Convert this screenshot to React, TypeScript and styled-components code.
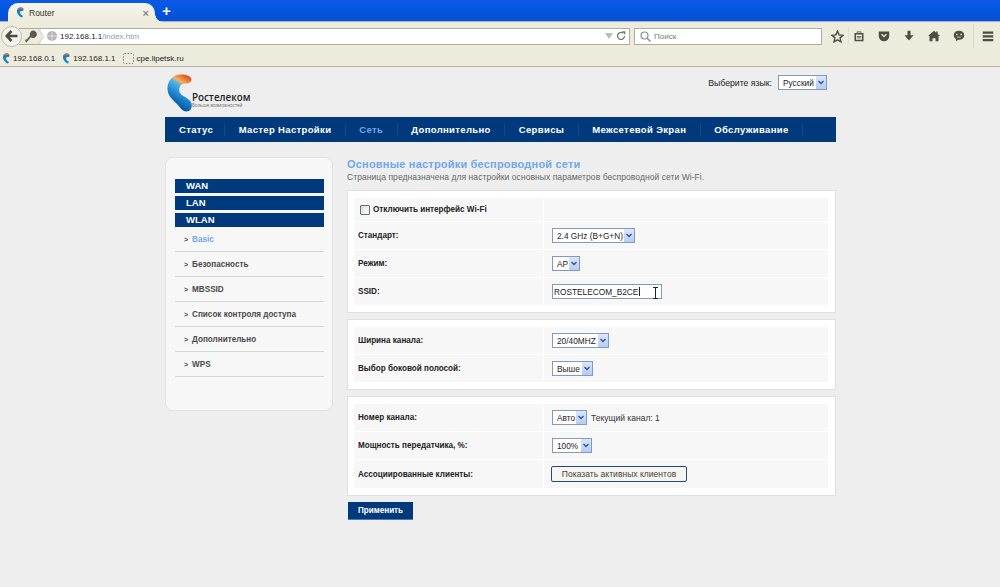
import React from 'react';
import styled, { createGlobalStyle } from 'styled-components';

const GlobalStyle = createGlobalStyle`
  html, body {
    margin: 0;
    padding: 0;
    height: 587px;
    overflow: hidden;
    background: #eeeeee;
    font-family: "Liberation Sans", Arial, sans-serif;
  }
`;

const TabStrip = styled.div`
  height: 22px;
  display: flex;
  align-items: flex-end;
  padding-left: 8px;
  background: linear-gradient(180deg, #0a5ae6 0%, #0253de 60%, #0a4fd0 100%);
  border-bottom: 1px solid #9db3d6;
  box-sizing: border-box;
`;

const Tab = styled.div`
  position: relative;
  width: 147px;
  height: 19px;
  margin-bottom: -1px;
  display: flex;
  align-items: center;
  box-sizing: border-box;
  padding: 0 6px 0 8px;
  gap: 5px;
  background: linear-gradient(180deg, #f6f5ec 0%, #ecebdc 100%);
  border-radius: 10px 10px 0 0;
  font-size: 8.5px;
  color: #333;

  &::after {
    content: '';
    position: absolute;
    right: -8px;
    bottom: 0;
    width: 8px;
    height: 8px;
    background: radial-gradient(circle at 100% 0, transparent 7.5px, #ecebdc 8px);
  }
`;

const TabTitle = styled.span`
  flex: 1;
`;

const TabClose = styled.span`
  font-size: 11px;
  font-weight: bold;
  color: #8a8a86;
`;

const NewTab = styled.span`
  margin: 0 0 3px 7px;
  color: #fff;
  font-size: 15px;
  font-weight: bold;
  line-height: 14px;
`;

const Toolbar = styled.div`
  height: 28px;
  display: flex;
  align-items: center;
  box-sizing: border-box;
  padding-left: 1px;
  background: #ecebdc;
`;

const BackButton = styled.div`
  width: 19px;
  height: 19px;
  display: flex;
  align-items: center;
  justify-content: center;
  border-radius: 50%;
  border: 1px solid #b9b8aa;
  background: #f4f3ea;
  flex: none;
  z-index: 1;
`;

const UrlBar = styled.div`
  flex: 1;
  height: 17px;
  box-sizing: border-box;
  display: flex;
  align-items: center;
  margin-left: -3px;
  padding-right: 3px;
  gap: 3px;
  background: #fff;
  border: 1px solid #aeac9c;
  border-left: none;
  font-size: 8px;
  color: #222;
`;

const IdentityBlock = styled.div`
  display: flex;
  align-items: center;
  gap: 1px;
  align-self: stretch;
  padding-left: 6px;
  background: linear-gradient(90deg, #ecebdc 90%, #fff 90%);
`;

const UrlText = styled.span`
  flex: 1;
  white-space: nowrap;
`;

const UrlPath = styled.span`
  color: #9a9a9a;
`;

const SearchBar = styled.div`
  width: 188px;
  height: 17px;
  box-sizing: border-box;
  display: flex;
  align-items: center;
  gap: 3px;
  margin: 0 0 0 4px;
  padding: 0 5px;
  background: #fff;
  border: 1px solid #aeac9c;
  font-size: 8px;
  color: #777;
  flex: none;
`;

const ToolIcons = styled.div`
  display: flex;
  align-items: center;
  gap: 13px;
  width: 170px;
  margin-left: 8px;
  padding-left: 1px;
  flex: none;
  box-sizing: border-box;
`;

const StarGroup = styled.span`
  display: flex;
  align-items: center;
  gap: 4px;
  margin-right: -9px;
`;

const FaintDivider = styled.span`
  width: 1px;
  height: 18px;
  background: #e0dfd0;
`;

const ToolDivider = styled.span`
  width: 1px;
  height: 24px;
  margin: 0 -5px;
  background: #d9d8c8;
`;

const BookmarksBar = styled.div`
  height: 17px;
  display: flex;
  align-items: center;
  gap: 7px;
  padding-left: 2px;
  box-sizing: border-box;
  background: #ecebdc;
  border-bottom: 1px solid #b4b3a6;
  font-size: 8px;
  color: #222;
`;

const Bookmark = styled.span`
  display: flex;
  align-items: center;
  gap: 3px;
`;

const Page = styled.div`
  width: 671px;
  margin: 0 0 0 165px;
`;

const Header = styled.div`
  height: 50px;
  display: flex;
  justify-content: space-between;
  align-items: flex-start;
  padding-right: 9px;
`;

const Logo = styled.div`
  display: flex;
  align-items: flex-end;
  padding: 7px 0 0 2px;
`;

const LogoText = styled.div`
  margin: 0 0 4px 0;
  font-size: 9.8px;
  font-weight: 600;
  line-height: 10px;
  color: #222;
  font-family: "Open Sans", sans-serif;
`;

const LogoSub = styled.div`
  font-size: 4.5px;
  font-weight: normal;
  line-height: 5px;
  color: #666;
`;

const LangBox = styled.div`
  display: flex;
  align-items: center;
  gap: 6px;
  margin-top: 8px;
  font-size: 8.7px;
  color: #222;
`;

const Nav = styled.div`
  height: 25px;
  display: flex;
  align-items: center;
  padding-left: 0.5px;
  background: #003a7d;
`;

const NavItem = styled.div<{ $active?: boolean }>`
  padding: 0 13.5px;
  height: 13px;
  line-height: 13px;
  font-size: 9.5px;
  font-weight: bold;
  letter-spacing: 0.35px;
  white-space: nowrap;
  color: ${(p) => (p.$active ? '#6fa8ea' : '#fff')};
  border-right: 1px solid #12498a;

  &:first-child {
    padding-right: 11px;
  }
`;

const Main = styled.div`
  display: flex;
  align-items: flex-start;
  margin-top: 15px;
`;

const Sidebar = styled.div`
  width: 168px;
  height: 254px;
  box-sizing: border-box;
  padding: 21px 8px 0 9px;
  flex: none;
  background: #f7f7f7;
  border: 1px solid #e2e2e2;
  border-radius: 8px;
`;

const SideHead = styled.div`
  height: 14px;
  line-height: 14px;
  margin-bottom: 3px;
  padding-left: 11px;
  background: #003a7d;
  color: #fff;
  font-size: 9.5px;
  font-weight: bold;
`;

const SideItem = styled.div<{ $active?: boolean }>`
  height: 25px;
  box-sizing: border-box;
  display: flex;
  align-items: center;
  gap: 4px;
  padding-left: 9px;
  border-bottom: 1px solid #d6d6d6;
  font-size: 8.15px;
  font-weight: bold;
  color: ${(p) => (p.$active ? '#6fa8ea' : '#4a4a4a')};
`;

const SideList = styled.div`
  margin-top: -3px;
`;

const SideMark = styled.span`
  font-size: 7px;
  color: #444;
`;

const Content = styled.div`
  width: 489px;
  margin: 0 0 0 14px;
`;

const Title = styled.div`
  margin-top: 1px;
  font-size: 11px;
  line-height: 13px;
  font-weight: bold;
  letter-spacing: 0.2px;
  color: #6fa8ea;
`;

const Subtitle = styled.div`
  font-size: 8.5px;
  line-height: 13px;
  letter-spacing: 0.06px;
  color: #666;
  margin-bottom: 6px;
`;

const Panel = styled.div`
  background: #fff;
  border: 1px solid #e0e0e0;
  padding: 7px 7px 7px 6px;
  margin-bottom: 6px;
  display: flex;
  flex-direction: column;
  gap: 1px;
`;

const Row = styled.div<{ $height: number }>`
  height: ${(p) => p.$height}px;
  display: grid;
  grid-template-columns: 189px 1fr;
  gap: 1px;
`;

const LabelCell = styled.div<{ $indent?: boolean }>`
  display: flex;
  align-items: center;
  gap: 3px;
  padding-left: ${(p) => (p.$indent ? '6px' : '4px')};
  background: #f7f7f7;
  font-size: 8.15px;
  font-weight: bold;
  color: #222;
`;

const ValueCell = styled.div`
  display: flex;
  align-items: center;
  gap: 4px;
  padding-left: 8px;
  background: #f7f7f7;
  font-size: 8.5px;
  color: #333;
`;

const CheckBox = styled.span`
  width: 8px;
  height: 8px;
  border: 1px solid #5f6f80;
  border-radius: 1px;
  background: linear-gradient(135deg, #dcdcd6, #fff);
  flex: none;
`;

const SelectWrap = styled.span`
  position: relative;
  display: inline-flex;
`;

const NativeSelect = styled.select<{ $width: number }>`
  appearance: none;
  width: ${(p) => p.$width}px;
  height: 15px;
  box-sizing: border-box;
  padding: 0 0 0 4px;
  border: 1px solid #7f9db9;
  border-radius: 0;
  background: #fff;
  font-family: "Liberation Sans", Arial, sans-serif;
  font-size: 8.3px;
  color: #222;
`;

const SelectArrow = styled.span`
  position: absolute;
  top: 1px;
  right: 1px;
  bottom: 1px;
  width: 10px;
  display: flex;
  align-items: center;
  justify-content: center;
  background: linear-gradient(180deg, #dbe6fb, #b6cbf6);
  pointer-events: none;
`;

const SsidInput = styled.input`
  width: 110px;
  height: 15px;
  box-sizing: border-box;
  padding: 0 0 0 1px;
  border: 1px solid #7f9db9;
  outline: none;
  background: #fff;
  font-family: "Liberation Sans", Arial, sans-serif;
  font-size: 8.3px;
  color: #222;
`;

const SsidWrap = styled.span`
  position: relative;
  display: inline-flex;
`;

const Cursor = styled.span`
  position: absolute;
  left: 101px;
  top: 3px;
  width: 5px;
  height: 12px;
  pointer-events: none;
`;

const Caret = styled.span`
  position: absolute;
  left: 87px;
  top: 3px;
  width: 1px;
  height: 9px;
  background: #222;
`;

const ClientsButton = styled.button`
  width: 136px;
  height: 16px;
  margin-left: -1px;
  padding: 0;
  border: 1px solid #1d4d78;
  border-radius: 2px;
  background: #f6f5ef;
  font-family: "Liberation Sans", Arial, sans-serif;
  font-size: 8.5px;
  letter-spacing: 0.03px;
  color: #444;
`;

const ApplyButton = styled.button`
  display: block;
  width: 65px;
  height: 18px;
  margin: 2px 0 0 1px;
  padding: 0;
  border: none;
  border-bottom: 1px solid #4d7ba8;
  background: #003a7d;
  font-family: "Liberation Sans", Arial, sans-serif;
  font-size: 8.15px;
  font-weight: bold;
  color: #fff;
`;

const FavIcon = () => (
  <svg width="8" height="11" viewBox="0 0 16 22">
    <path d="M9 1C4 1 1 5 2 10c1 5 5 9 9 11 2 0 3-2 2-4-2-1-5-3-5-6 0-2 2-3 3-3 3 0 4-1 4-3 0-3-3-4-6-4z" fill="#1384c6" />
    <path d="M9 1C6 1 4 3 3 6c2-1 4-2 7-2 2 0 4 0 5-1-1-1-3-2-6-2z" fill="#e8662a" />
  </svg>
);

const LogoMark = () => (
  <svg width="25" height="38" viewBox="0 0 25 38">
    <defs>
      <linearGradient id="logoFill" x1="0.85" y1="0" x2="0.45" y2="1">
        <stop offset="0" stopColor="#d8352a" />
        <stop offset="0.14" stopColor="#ee7a2a" />
        <stop offset="0.27" stopColor="#f3b065" />
        <stop offset="0.36" stopColor="#4fb4e4" />
        <stop offset="0.7" stopColor="#1379c6" />
        <stop offset="1" stopColor="#0a3f8c" />
      </linearGradient>
    </defs>
    <path
      d="M14 .5C6 .5 .5 6.500 .5 14.500C.5 21.500 5.500 25.500 9.500 29.500C13.500 33.500 15 37.500 19.500 37.500C23.500 37.500 25.500 33.500 24.500 29.500C23.500 25.500 18.500 23.500 15.500 21.500C12.500 19.500 11.500 16.500 12.500 13.500C13.500 10.500 15.500 9.500 18.500 9.500C22.500 9.500 24.500 7.500 24.500 5.500C24.500 2.500 19.500 .5 14 .5Z"
      fill="url(#logoFill)"
    />
  </svg>
);

const ToolIcon = ({ d }: { d: string }) => (
  <svg width={12} height={12} viewBox="0 0 16 16" fill="#4f4d40"><path d={d} fillRule="evenodd" /></svg>
);

const iconPaths = {
  clipboard: 'M2 4h3V2h6v2h3v11H2zM4 6v7h8V6zM6 3v1h4V3zM5 8h6v1H5zM5 10h6v1H5z',
  pocket: 'M1 2h14v6a7 7 0 0 1-14 0zM4 6l4 4 4-4-1.500-1L8 7.500 5.500 5z',
  download: 'M6 1h4v6h4l-6 7-6-7h4z',
  home: 'M8 1l3 2.500V2h2v3.200L16 8h-2v7h-4v-4H6v4H2V8H0z',
  chat: 'M8 1c4.400 0 7 2.500 7 6s-2.600 6-7 6H7l-3 2v-3C2 11 1 9.500 1 7c0-3.500 2.600-6 7-6zM4 5v2h2V5zM10 5v2h2V5zM4.500 9c1 1.500 6 1.500 7 0z',
  menu: 'M1 2h14v3H1zM1 7h14v3H1zM1 12h14v3H1z',
};

const SelectField = ({ value, width }: { value: string; width: number }) => (
  <SelectWrap>
    <NativeSelect $width={width} defaultValue={value}>
      <option>{value}</option>
    </NativeSelect>
    <SelectArrow>
      <svg width="6" height="5" viewBox="0 0 6 5">
        <path d="M0.500 1L3 3.500 5.500 1" fill="none" stroke="#34548f" strokeWidth="1.400" />
      </svg>
    </SelectArrow>
  </SelectWrap>
);

const sideItems = ['Basic', 'Безопасность', 'MBSSID', 'Список контроля доступа', 'Дополнительно', 'WPS'];
const navItems = ['Статус', 'Мастер Настройки', 'Сеть', 'Дополнительно', 'Сервисы', 'Межсетевой Экран', 'Обслуживание'];

const App = () => {
  return (
    <>
      <GlobalStyle />
      <TabStrip>
        <Tab>
          <FavIcon />
          <TabTitle>Router</TabTitle>
          <TabClose>×</TabClose>
        </Tab>
        <NewTab>+</NewTab>
      </TabStrip>
      <Toolbar>
        <BackButton>
          <svg width="13" height="12" viewBox="0 0 13 12">
            <path d="M6.500 1L1.800 6l4.700 5M2.500 6H12.500" fill="none" stroke="#4f4d40" strokeWidth="2.600" />
          </svg>
        </BackButton>
        <UrlBar>
          <IdentityBlock>
            <svg width="12" height="13" viewBox="0 0 12 13">
              <path d="M8 .5a3.800 3.800 0 1 1-2.300 6.800L1.500 12.500l-1.300-1.200 .3-1.800 1.500-.2L5 5.500A3.800 3.800 0 0 1 8 .5z" fill="#5c5a50" />
            </svg>
            <svg width="6" height="15" viewBox="0 0 6 15">
              <path d="M0 0L5.500 7.500 0 15H0z" fill="#ecebdc" />
              <path d="M0 0L5.500 7.500 0 15" fill="none" stroke="#cfcebf" />
            </svg>
          </IdentityBlock>
          <svg width="10" height="10" viewBox="0 0 10 10">
            <circle cx="5" cy="5" r="5" fill="#b5b5b5" />
            <path d="M0 5h10M5 0v10" stroke="#e6e6e6" strokeWidth="0.800" />
          </svg>
          <UrlText>
            192.168.1.1<UrlPath>/index.htm</UrlPath>
          </UrlText>
          <svg width="8" height="6" viewBox="0 0 8 6"><path d="M0 0h8L4 6z" fill="#bdbdb8" /></svg>
          <svg width="10" height="10" viewBox="0 0 10 10">
            <path d="M8.500 5A3.500 3.500 0 1 1 7 2" fill="none" stroke="#77766c" strokeWidth="1.300" />
            <path d="M6 0l3.500.5L9 4z" fill="#77766c" />
          </svg>
        </UrlBar>
        <SearchBar>
          <svg width="11" height="11" viewBox="0 0 11 11">
            <circle cx="4.500" cy="4.500" r="3.500" fill="none" stroke="#8f8f8f" strokeWidth="1.200" />
            <path d="M7 7l3.500 3.500" stroke="#8f8f8f" strokeWidth="1.500" />
          </svg>
          Поиск
        </SearchBar>
        <ToolIcons>
          <StarGroup>
            <svg width="13" height="13" viewBox="0 0 16 16">
              <path d="M8 1.500l2 4.500 4.800.5-3.600 3.200 1 4.800L8 12.100 3.800 14.500l1-4.800L1.200 6.500 6 6z" fill="none" stroke="#4f4d40" strokeWidth="1.800" />
            </svg>
            <FaintDivider />
          </StarGroup>
          <ToolIcon d={iconPaths.clipboard} />
          <ToolIcon d={iconPaths.pocket} />
          <ToolIcon d={iconPaths.download} />
          <ToolIcon d={iconPaths.home} />
          <ToolIcon d={iconPaths.chat} />
          <ToolDivider />
          <ToolIcon d={iconPaths.menu} />
        </ToolIcons>
      </Toolbar>
      <BookmarksBar>
        <Bookmark><FavIcon />192.168.0.1</Bookmark>
        <Bookmark><FavIcon />192.168.1.1</Bookmark>
        <Bookmark>
          <svg width="11" height="11" viewBox="0 0 11 11">
            <rect x="0.500" y="0.500" width="10" height="10" rx="1" fill="none" stroke="#8b8a80" strokeDasharray="1.500 1.500" />
          </svg>
          cpe.lipetsk.ru
        </Bookmark>
      </BookmarksBar>
      <Page>
        <Header>
          <Logo>
            <LogoMark />
            <LogoText>
              Ростелеком
              <LogoSub>Больше возможностей</LogoSub>
            </LogoText>
          </Logo>
          <LangBox>
            Выберите язык:
            <SelectField value="Русский" width={49} />
          </LangBox>
        </Header>
        <Nav>
          {navItems.map((item) => (
            <NavItem key={item} $active={item === 'Сеть'}>{item}</NavItem>
          ))}
        </Nav>
        <Main>
          <Sidebar>
            <SideHead>WAN</SideHead>
            <SideHead>LAN</SideHead>
            <SideHead>WLAN</SideHead>
            <SideList>
              {sideItems.map((item) => (
                <SideItem key={item} $active={item === 'Basic'}>
                  <SideMark>&gt;</SideMark>
                  {item}
                </SideItem>
              ))}
            </SideList>
          </Sidebar>
          <Content>
            <Title>Основные настройки беспроводной сети</Title>
            <Subtitle>Страница предназначена для настройки основных параметров беспроводной сети Wi-Fi.</Subtitle>
            <Panel>
              <Row $height={23}>
                <LabelCell $indent><CheckBox />Отключить интерфейс Wi-Fi</LabelCell>
                <ValueCell />
              </Row>
              <Row $height={27}>
                <LabelCell>Стандарт:</LabelCell>
                <ValueCell><SelectField value="2.4 GHz (B+G+N)" width={83} /></ValueCell>
              </Row>
              <Row $height={27}>
                <LabelCell>Режим:</LabelCell>
                <ValueCell><SelectField value="AP" width={28} /></ValueCell>
              </Row>
              <Row $height={27}>
                <LabelCell>SSID:</LabelCell>
                <ValueCell>
                  <SsidWrap>
                    <SsidInput defaultValue="ROSTELECOM_B2CE" />
                    <Caret />
                    <Cursor>
                      <svg width="5" height="12" viewBox="0 0 5 12">
                        <path d="M0 .5h5M0 11.500h5M2.500 .5v11" fill="none" stroke="#222" />
                      </svg>
                    </Cursor>
                  </SsidWrap>
                </ValueCell>
              </Row>
            </Panel>
            <Panel>
              <Row $height={27}>
                <LabelCell>Ширина канала:</LabelCell>
                <ValueCell><SelectField value="20/40MHZ" width={57} /></ValueCell>
              </Row>
              <Row $height={27}>
                <LabelCell>Выбор боковой полосой:</LabelCell>
                <ValueCell><SelectField value="Выше" width={41} /></ValueCell>
              </Row>
            </Panel>
            <Panel>
              <Row $height={27}>
                <LabelCell>Номер канала:</LabelCell>
                <ValueCell>
                  <SelectField value="Авто" width={35} />
                  Текущий канал: 1
                </ValueCell>
              </Row>
              <Row $height={27}>
                <LabelCell>Мощность передатчика, %:</LabelCell>
                <ValueCell><SelectField value="100%" width={40} /></ValueCell>
              </Row>
              <Row $height={28}>
                <LabelCell>Ассоциированные клиенты:</LabelCell>
                <ValueCell><ClientsButton>Показать активных клиентов</ClientsButton></ValueCell>
              </Row>
            </Panel>
            <ApplyButton>Применить</ApplyButton>
          </Content>
        </Main>
      </Page>
    </>
  );
};

export default App;
